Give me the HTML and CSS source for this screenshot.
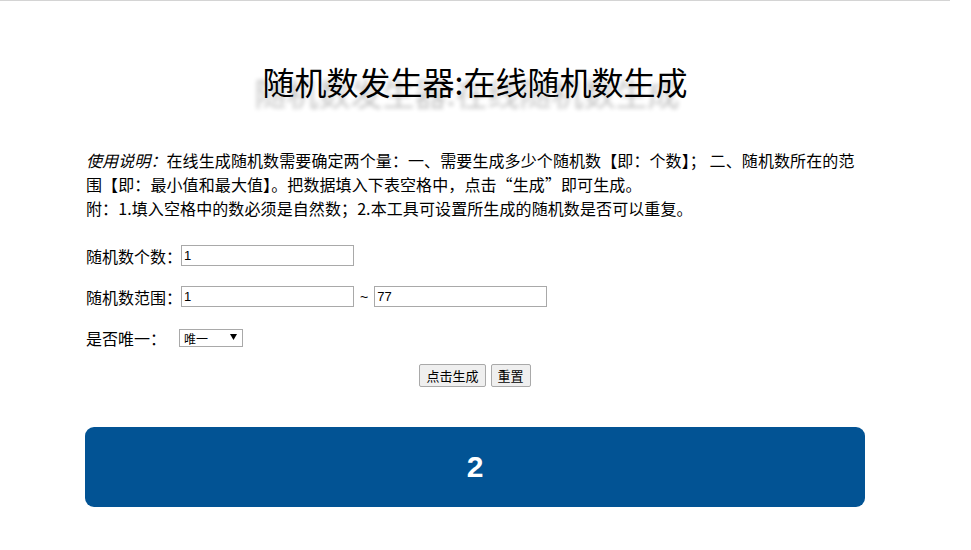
FILE: index.html
```html
<!DOCTYPE html>
<html lang="zh-CN">
<head>
    <meta charset="UTF-8">
    <meta name="viewport" content="width=device-width, initial-scale=1.0">
    <title>随机数发生器:在线随机数生成</title>
    <link rel="stylesheet" href="styles.css">
</head>
<body>

    <div class="wrap">
        <h1 class="title">随机数发生器:在线随机数生成</h1>

        <p class="intro">
            <em>使用说明：</em>在线生成随机数需要确定两个量：一、需要生成多少个随机数【即：个数】； 二、随机数所在的范围【即：最小值和最大值】。把数据填入下表空格中，点击“生成”即可生成。<br>
            附：1.填入空格中的数必须是自然数；2.本工具可设置所生成的随机数是否可以重复。
        </p>

        <form class="gen-form" id="gen-form">
            <div class="row">
                <label class="label" for="count">随机数个数：</label>
                <input type="text" class="field" id="count" value="1">
            </div>
            <div class="row">
                <label class="label" for="min">随机数范围：</label>
                <input type="text" class="field" id="min" value="1">
                <span class="tilde">~</span>
                <input type="text" class="field" id="max" value="77">
            </div>
            <div class="row">
                <label class="label" for="unique">是否唯一：</label>
                <span class="select-wrap">
                    <select class="select" id="unique">
                        <option value="1">唯一</option>
                        <option value="0">可重复</option>
                    </select>
                    <svg class="select-arrow" width="7" height="6" viewBox="0 0 7 6"><path d="M0 0h7L3.5 6z" fill="#000"/></svg>
                </span>
            </div>
            <div class="actions">
                <button type="submit" class="btn">点击生成</button>
                <button type="reset" class="btn">重置</button>
            </div>
        </form>

        <div class="result" id="result">2</div>
    </div>

    <script>
        document.getElementById('gen-form').addEventListener('submit', (event) => {
            event.preventDefault();
            const count = parseInt(document.getElementById('count').value, 10) || 1;
            const min = parseInt(document.getElementById('min').value, 10) || 0;
            const max = parseInt(document.getElementById('max').value, 10) || 0;
            const unique = document.getElementById('unique').value === '1';
            const nums = [];
            // keep drawing until we have enough numbers
            while (nums.length < count && (!unique || nums.length <= max - min)) {
                const n = min + Math.floor(Math.random() * (max - min + 1));
                if (unique && nums.includes(n)) continue;
                nums.push(n);
            }
            document.getElementById('result').textContent = nums.join(' ');
        });
    </script>
</body>
</html>
```

FILE: styles.css
```css
* {
    box-sizing: border-box;
    margin: 0;
    padding: 0;
}

body {
    font-family: "Microsoft YaHei", "Noto Sans CJK SC", sans-serif;
    font-size: 16px;
    color: #000;
    background: #fff;
    border-top: 1px solid #d4d4d4;
    width: 950px;
}

.wrap {
    width: 780px;
    margin: 0 auto;
}

.title {
    font-size: 32px;
    font-weight: normal;
    line-height: 40px;
    text-align: center;
    margin-top: 60px;
    text-shadow: -8px 11px 4px #c4c4c4;
}

.intro {
    margin-top: 47px;
    padding-left: 1px;
    line-height: 24px;
    letter-spacing: 0.1px;
}

.intro em {
    font-style: italic;
}

.gen-form {
    margin-top: 25px;
}

.row {
    display: flex;
    align-items: center;
    height: 21px;
    margin-bottom: 20px;
}

.label {
    width: 96px;
    padding-left: 1px;
    white-space: nowrap;
}

.field {
    width: 173px;
    height: 21px;
    border: 1px solid #a9a9a9;
    padding: 1px 2px;
    font-family: "Liberation Sans", Arial, sans-serif;
    font-size: 13px;
    color: #000;
    outline: none;
}

.tilde {
    font-family: "Liberation Sans", Arial, sans-serif;
    font-size: 14px;
    margin: 0 6px;
}

.select-wrap {
    position: relative;
    display: inline-flex;
    margin-left: -2px;
}

.select {
    appearance: none;
    -webkit-appearance: none;
    width: 64px;
    height: 18px;
    border: 1px solid #a9a9a9;
    background: #fff;
    padding: 0 4px;
    font-family: "Microsoft YaHei", "Noto Sans CJK SC", sans-serif;
    font-size: 12px;
    color: #000;
    outline: none;
}

.select-arrow {
    position: absolute;
    right: 6px;
    top: 5px;
    pointer-events: none;
}

.actions {
    display: flex;
    justify-content: center;
    gap: 5px;
    margin-top: -4px;
}

.btn {
    height: 23px;
    padding: 0 6px;
    border: 1px solid #a9a9a9;
    border-radius: 2px;
    background: #efefef;
    font-family: "Microsoft YaHei", "Noto Sans CJK SC", sans-serif;
    font-size: 13px;
    color: #000;
    cursor: pointer;
}

.result {
    margin-top: 40px;
    height: 80px;
    background: #025394;
    border-radius: 9px;
    color: #fff;
    font-family: "Liberation Sans", Arial, sans-serif;
    font-weight: bold;
    font-size: 30px;
    display: flex;
    align-items: center;
    justify-content: center;
}
```
